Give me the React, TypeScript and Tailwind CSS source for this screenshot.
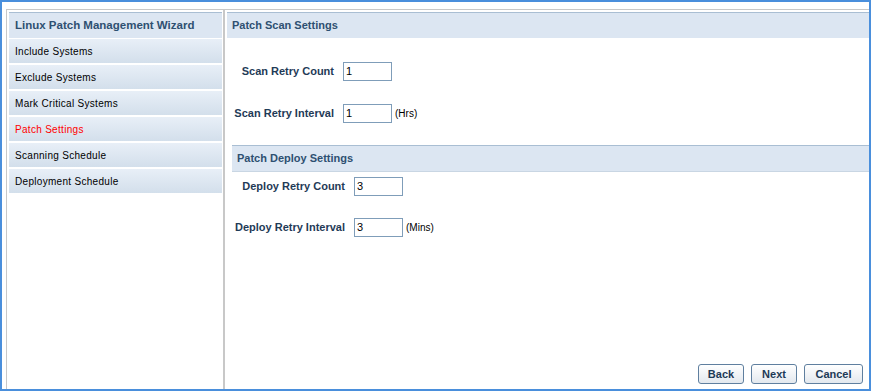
import React from "react";

const font = { fontFamily: '"Liberation Sans", Arial, sans-serif' };

function Btn({ label, w }: { label: string; w: string }) {
  return (
    <button
      className={`${w} h-[20px] rounded-[3px] border border-[#5f7f9f] bg-gradient-to-b from-[#ffffff] to-[#e3e8ee] text-[11px] font-bold text-[#1d3a57] flex items-center justify-center`}
    >
      {label}
    </button>
  );
}

function Field({
  label,
  value,
  unit,
  labelW,
}: {
  label: string;
  value: string;
  unit?: string;
  labelW: string;
}) {
  return (
    <div className="flex items-center h-[19px]">
      <div className={`${labelW} text-right pr-[9px] text-[11px] font-bold text-[#1f3b57] whitespace-nowrap`}>
        {label}
      </div>
      <div className="w-[49px] h-[19px] border border-[#7f9db9] bg-white text-[11px] text-black pl-[2px] flex items-center">
        {value}
      </div>
      {unit && <div className="pl-[3px] text-[10px] text-black">{unit}</div>}
    </div>
  );
}

const items = [
  "Include Systems",
  "Exclude Systems",
  "Mark Critical Systems",
  "Patch Settings",
  "Scanning Schedule",
  "Deployment Schedule",
];

export default function App() {
  return (
    <div
      style={font}
      className="w-[871px] h-[391px] border-2 border-[#4a8fdc] bg-white overflow-hidden"
    >
      <div className="h-full pl-[4px] pt-[7px]">
        <div className="h-full border-l border-t border-[#c8c8c8] flex">
          {/* left column */}
          <div className="w-[218px] h-full pt-[2px] pl-[2px] border-r-2 border-[#c8c8c8] flex flex-col">
            <div className="w-[213px] h-[26px] border-t border-[#a9bed3] bg-[#dce6f2] pl-[6px] flex items-center text-[11.5px] font-bold text-[#2e5071]">
              Linux Patch Management Wizard
            </div>
            <div className="flex flex-col gap-[2px] mt-[1px]">
              {items.map((it) => (
                <div
                  key={it}
                  className={`w-[213px] h-[24px] bg-gradient-to-b from-[#e8eff7] to-[#d3dfeb] pl-[6px] flex items-center text-[10px] tracking-[0.3px] ${
                    it === "Patch Settings" ? "text-[#ff0000]" : "text-black"
                  }`}
                >
                  {it}
                </div>
              ))}
            </div>
          </div>
          {/* right column */}
          <div className="flex-1 h-full pt-[2px] pl-[2px] flex flex-col">
            <div className="h-[26px] border-t border-[#a9bed3] bg-[#dce6f2] pl-[5px] flex items-center text-[11px] font-bold text-[#2e5071]">
              Patch Scan Settings
            </div>
            <div className="pl-[6px] pt-[24px] flex flex-col gap-[23px]">
              <Field label="Scan Retry Count" value="1" labelW="w-[110px]" />
              <Field label="Scan Retry Interval" value="1" unit="(Hrs)" labelW="w-[110px]" />
            </div>
            <div className="ml-[5px] mt-[22px] h-[27px] border-t border-b border-t-[#a9bed3] border-b-[#c9d6e3] bg-[#dce6f2] pl-[5px] flex items-center text-[11px] font-bold text-[#2e5071]">
              Patch Deploy Settings
            </div>
            <div className="pl-[6px] pt-[5px] flex flex-col gap-[22px]">
              <Field label="Deploy Retry Count" value="3" labelW="w-[121px]" />
              <Field label="Deploy Retry Interval" value="3" unit="(Mins)" labelW="w-[121px]" />
            </div>
            <div className="flex-1" />
            <div className="flex justify-end gap-[7px] pr-[6px] pb-[5px]">
              <Btn label="Back" w="w-[46px]" />
              <Btn label="Next" w="w-[46px]" />
              <Btn label="Cancel" w="w-[59px]" />
            </div>
          </div>
        </div>
      </div>
    </div>
  );
}
